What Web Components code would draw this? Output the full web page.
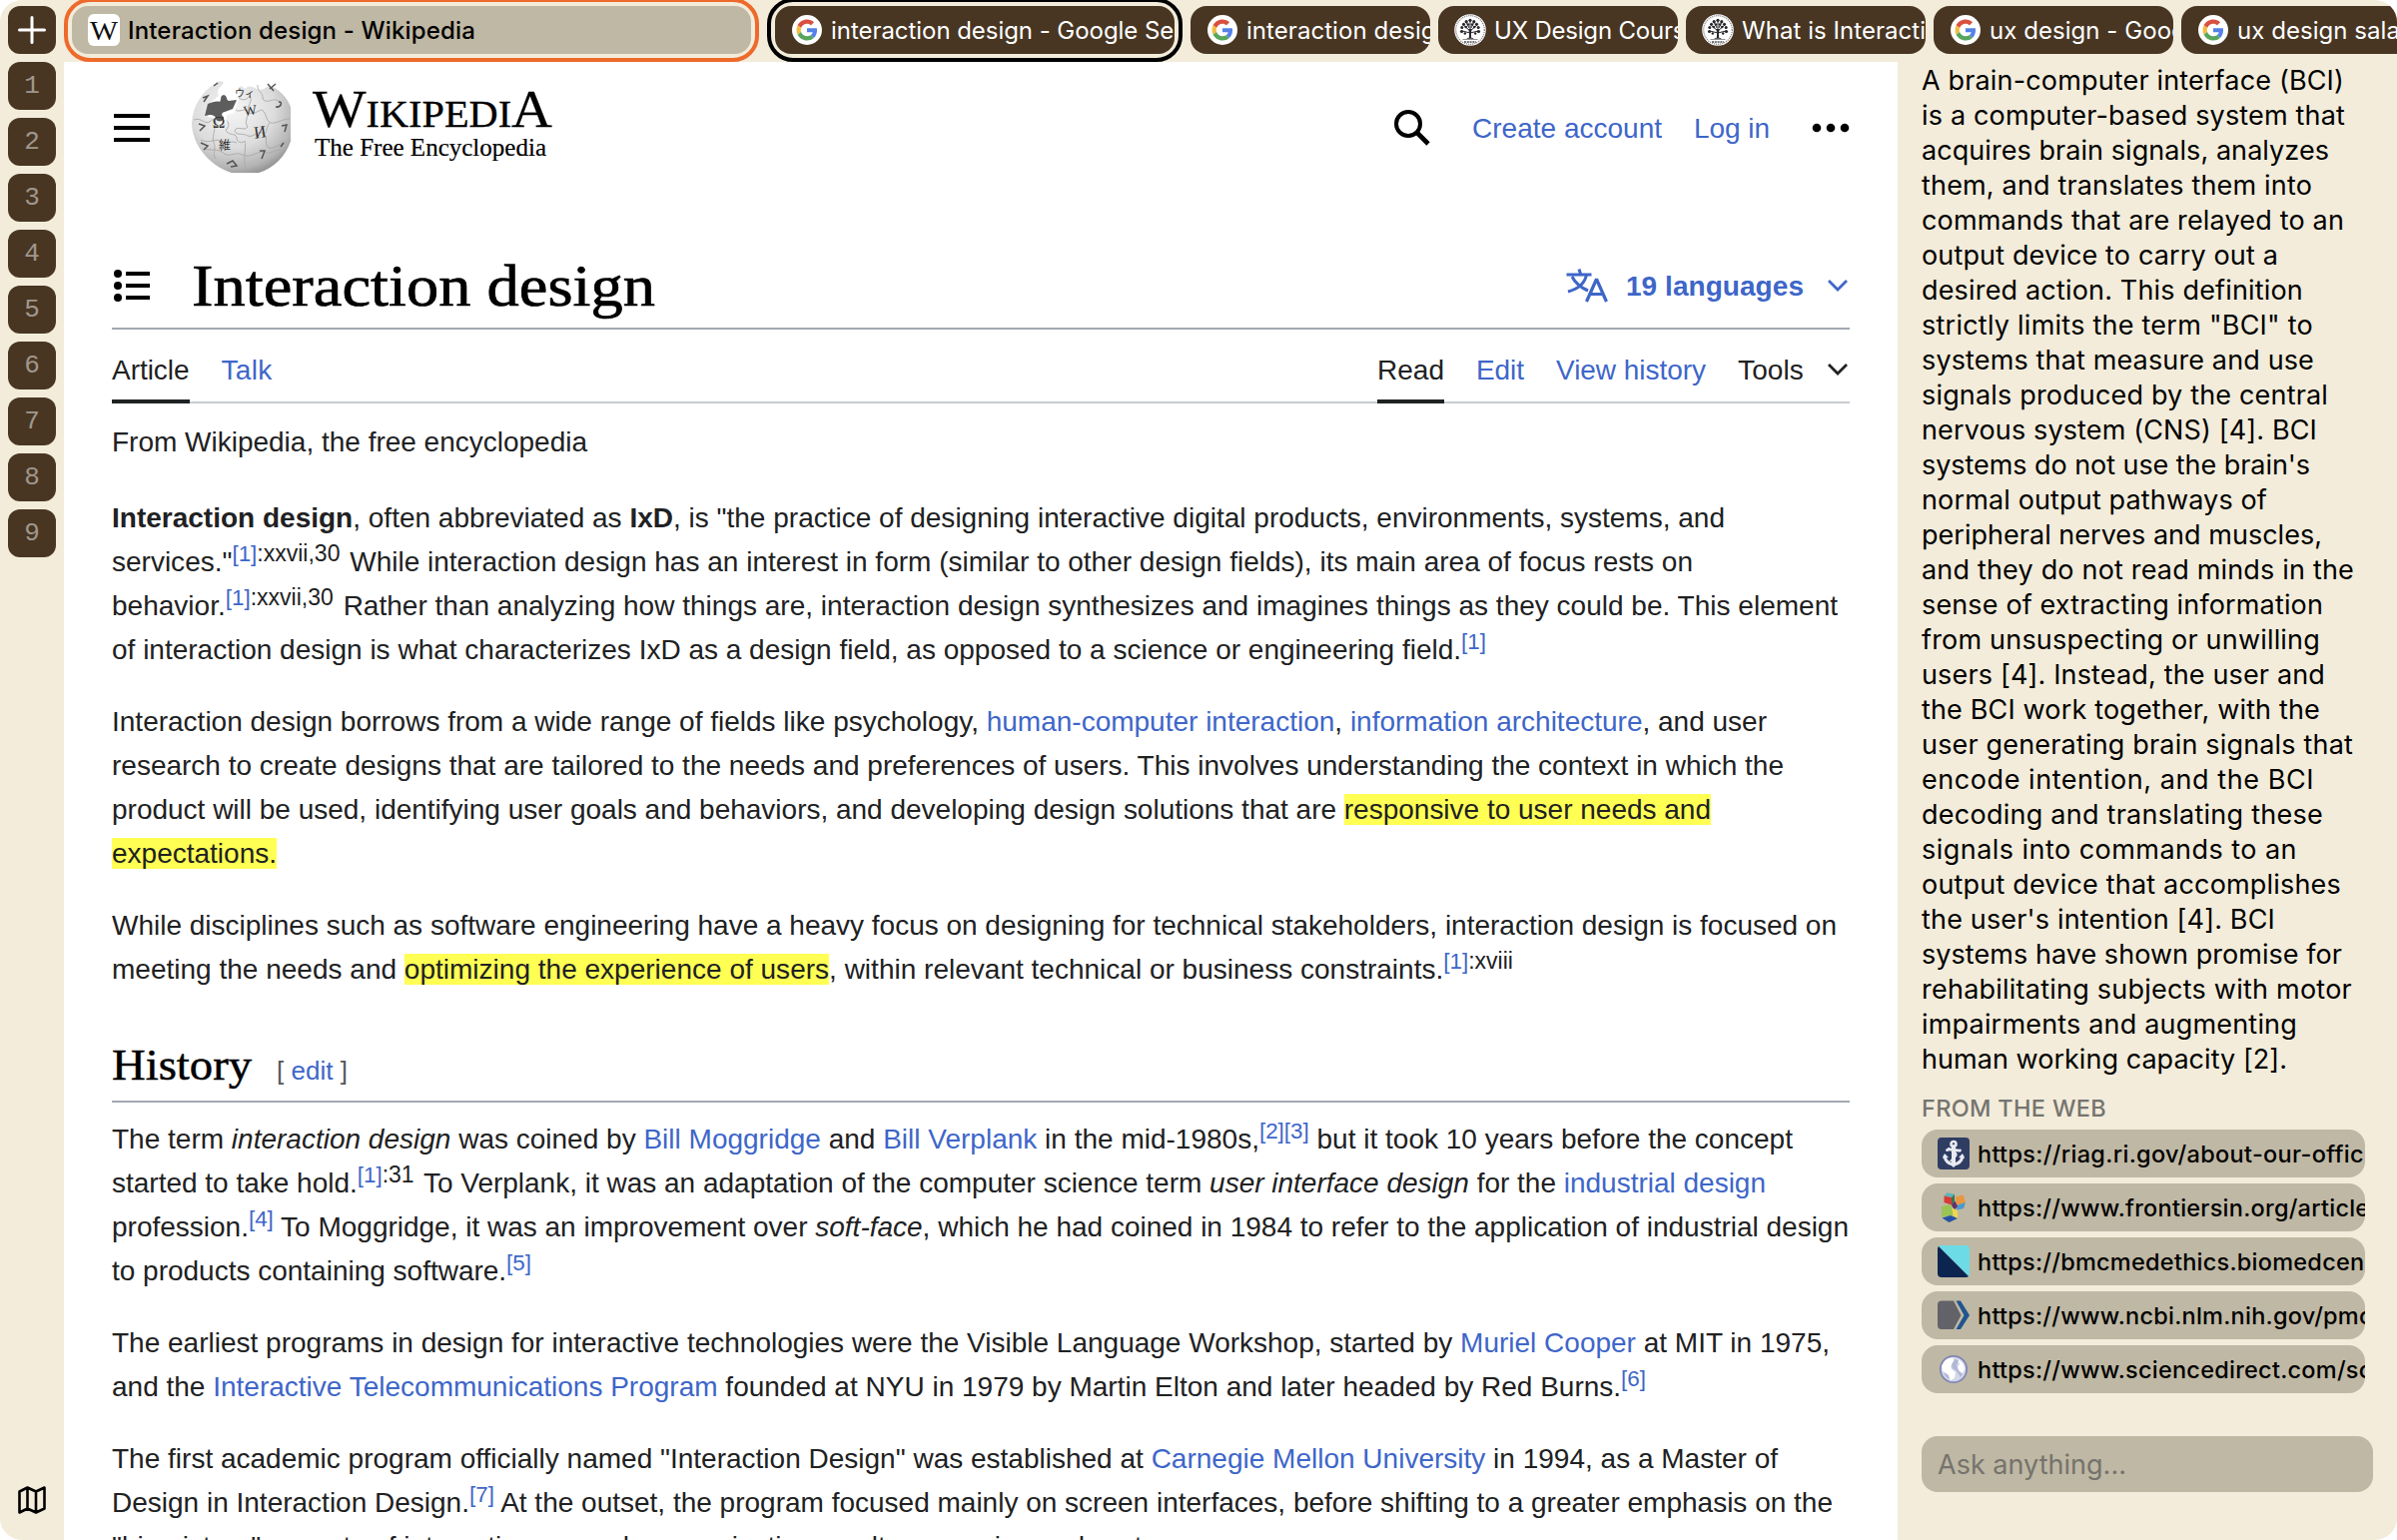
<!DOCTYPE html>
<html lang="en">
<head>
<meta charset="utf-8">
<title>Interaction design - Wikipedia</title>
<style>
html,body{margin:0;padding:0;width:2400px;height:1542px;overflow:hidden;background:#fff}
</style>
</head>
<body>
<browser-window></browser-window>
<script>
const ICONS = {
  plus: `<svg width="28" height="28" viewBox="0 0 28 28"><path d="M14 1.5v25M1.5 14h25" stroke="#fff" stroke-width="3" stroke-linecap="round"/></svg>`,
  map: `<svg width="30" height="30" viewBox="0 0 30 30" fill="none" stroke="#000" stroke-width="2.6" stroke-linejoin="round"><path d="M2.5 6.5 10.500 2.500 19 6.500 27.500 2.500V23.500L19 27.500 10.500 23.500 2.500 27.500ZM10.500 2.500V23.500M19 6.500V27.500"/></svg>`,
  menu: `<svg width="36" height="28" viewBox="0 0 36 28"><path d="M0 0h36v4H0zM0 12h36v4H0zM0 24h36v4H0z"/></svg>`,
  toc: `<svg width="36" height="32" viewBox="0 0 36 32"><circle cx="4" cy="4" r="4"/><circle cx="4" cy="16" r="4"/><circle cx="4" cy="28" r="4"/><path d="M12 2h24v4H12zM12 14h24v4H12zM12 26h24v4H12z"/></svg>`,
  search: `<svg width="36" height="36" viewBox="0 0 36 36" fill="none" stroke="#000"><circle cx="14" cy="14" r="12" stroke-width="4"/><path d="M22.500 22.500 34 34" stroke-width="4.600"/></svg>`,
  more: `<svg width="38" height="10" viewBox="0 0 38 10"><circle cx="5" cy="5" r="4.300"/><circle cx="19" cy="5" r="4.300"/><circle cx="33" cy="5" r="4.300"/></svg>`,
  chevron: `<svg width="20" height="12" viewBox="0 0 20 12" fill="none" stroke="currentColor" stroke-width="2.800"><path d="M1 1 10 10 19 1"/></svg>`,
  lang: `<svg width="42" height="34" viewBox="0 0 42 34" fill="none" stroke="#3e66c9" stroke-width="3"><path d="M13 .5 14.500 5M.5 6h25M20.500 6C19 14 13 20 2 23M6 8c3 6 9 11 16 14"/><path d="M20.500 33 30.500 10.500 40.500 33M24.500 25.500h12" stroke-width="3.200" stroke-linejoin="bevel"/></svg>`,
  google: `<svg width="32" height="32" viewBox="0 0 32 32"><circle cx="16" cy="16" r="15" fill="#fff"/><g transform="translate(5.500 5.500) scale(.4375)"><path fill="#d9503f" d="M24 9.500c3.540 0 6.710 1.220 9.210 3.600l6.850-6.850C35.900 2.380 30.470 0 24 0 14.620 0 6.510 5.380 2.560 13.220l7.980 6.190C12.430 13.720 17.740 9.500 24 9.500z"/><path fill="#5482e8" d="M46.980 24.550c0-1.570-.15-3.090-.38-4.550H24v9.020h12.940c-.58 2.960-2.260 5.480-4.780 7.180l7.730 6c4.510-4.180 7.090-10.360 7.090-17.650z"/><path fill="#f2bd42" d="M10.530 28.590c-.48-1.450-.76-2.990-.76-4.590s.27-3.140.76-4.590l-7.980-6.190C.92 16.460 0 20.120 0 24s.92 7.540 2.560 10.780l7.970-6.190z"/><path fill="#58a65c" d="M24 48c6.480 0 11.930-2.130 15.890-5.810l-7.730-6c-2.150 1.450-4.920 2.300-8.160 2.300-6.260 0-11.570-4.220-13.470-9.910l-7.980 6.190C6.510 42.620 14.620 48 24 48z"/></g></svg>`,
  tree: `<svg width="32" height="32" viewBox="0 0 32 32"><circle cx="16" cy="16" r="15.800" fill="#fff"/><circle cx="16" cy="16" r="14.300" fill="none" stroke="#8d8d92" stroke-width="1.300" stroke-dasharray="1.200 .9"/><g fill="#26262b"><path d="M14.700 24c.6-3 .4-6-.4-9h3.400c-.8 3-1 6-.4 9h2v.8h-6.600V24z"/><g stroke="#26262b" stroke-width="1" fill="none"><path d="M16 19 8 17M16 17 9 11M16 17V6M16 17 23 11M16 19 24 17M15 14 12 8M17 14 20 8"/></g><circle cx="7.500" cy="17.500" r="1.600"/><circle cx="7.800" cy="13.500" r="1.500"/><circle cx="9.500" cy="10.200" r="1.500"/><circle cx="12.200" cy="7.700" r="1.600"/><circle cx="16" cy="6.300" r="1.600"/><circle cx="19.800" cy="7.700" r="1.600"/><circle cx="22.500" cy="10.200" r="1.500"/><circle cx="24.200" cy="13.500" r="1.500"/><circle cx="24.500" cy="17.500" r="1.600"/><circle cx="11.800" cy="13" r="1.300"/><circle cx="20.200" cy="13" r="1.300"/><circle cx="14" cy="10.500" r="1.200"/><circle cx="18" cy="10.500" r="1.200"/><circle cx="10.800" cy="19.500" r="1.200"/><circle cx="21.200" cy="19.500" r="1.200"/></g><path d="M8.500 25.500h15" stroke="#777" stroke-width=".8"/><path d="M10 28h12" stroke="#777" stroke-width="1.800" stroke-dasharray="2 .8"/></svg>`,
  anchor: `<svg width="32" height="32" viewBox="0 0 32 32"><rect width="32" height="32" rx="4" fill="#2f3d63"/><g fill="none" stroke="#e8eaf1" stroke-linecap="round"><circle cx="16" cy="6.500" r="2.500" stroke-width="2.600"/><path d="M16 9v17" stroke-width="4"/><path d="M9.500 12.500c4-2 9 1 13 .5" stroke-width="2.800"/><path d="M7 19c1 5 5 7.500 9 8 4-.5 8-3 9-8" stroke-width="3"/><path d="M11 10.500c5 6 7 1 8 7-1 3-4 3-6 6" stroke-width="1.500"/></g><path d="M5 21l2-5 4 4zM27 21l-2-5-4 4zM13 27h6l-3 3z" fill="#e8eaf1"/></svg>`,
  frontiers: `<svg width="32" height="32" viewBox="0 0 32 32"><path fill="#5bb5ba" d="M6.500 4.500 9.500 1.300 17 2.800 14 6z"/><path fill="#d93a36" d="M6.500 4.500 14 6v7.500L6.500 11z"/><path fill="#35784b" d="M14 6 17 2.800v7L14 14.500z"/><path fill="#e8963f" d="M18 5.500 25.500 3.500 28 11 18.500 14z"/><path fill="#4a9bcb" d="M18.500 14 28 11 26 17 19.500 18.500z"/><path fill="#652f6e" d="M14 13.500 17.500 9.500 20 15 16.500 19z"/><path fill="#9ac455" d="M4 15 13.500 13 15.500 24 4 25.500z"/><path fill="#ecd94d" d="M14.500 16 20 19.500V27.500L15.500 24z"/><path fill="#2552a3" d="M4.500 26.500 13 24 20 27 11.500 31z"/></svg>`,
  bmc: `<svg width="32" height="32" viewBox="0 0 32 32"><defs><clipPath id="r"><rect width="32" height="32" rx="4"/></clipPath></defs><g clip-path="url(#r)"><path fill="#6ddbe6" d="M0 0h32v32z"/><path fill="#0c2450" d="M0 0v32h32z"/></g></svg>`,
  ncbi: `<svg width="32" height="32" viewBox="0 0 32 32"><path fill="#626368" d="M4 1.500h12L23.500 16 16 30H4a4 4 0 0 1-4-4V5.500a4 4 0 0 1 4-4z"/><path fill="#20558f" d="M18.500 1.500H23L32 16 23 30H18.500L26.500 16z"/></svg>`,
  globe: `<svg width="32" height="32" viewBox="0 0 32 32"><circle cx="16" cy="16" r="13.200" fill="#d3d7e8" stroke="#8187b4" stroke-width="1.800"/><path fill="#fff" d="M7 8c2-3 6-4 9-3l1 3-4 5 1 3 4 3-1 6-4 2-3-6-5-3-1-5zM20 6c4 1 7 6 7 10l-2 4-4-2-1-4 2-3z"/><path fill="#a9afd0" d="M17 6l4 1-2 5 2 5 4 4-2 3-4-6-4-3-1-4zM6 19l5 3 1 4c-3-1-5-4-6-7z" opacity=".8"/></svg>`,
  wfav: `<svg width="32" height="32" viewBox="0 0 32 32"><rect width="32" height="32" rx="6" fill="#fff"/><text x="16" y="26" text-anchor="middle" textLength="28" lengthAdjust="spacingAndGlyphs" font-family="Liberation Serif,serif" font-size="28" fill="#111">W</text></svg>`,
  wiki: `<svg width="100" height="92" viewBox="0 0 100 92"><defs>
    <radialGradient id="g" cx=".4" cy=".3" r=".75"><stop offset="0" stop-color="#f6f6f6"/><stop offset=".55" stop-color="#dcdcdc"/><stop offset=".85" stop-color="#b2b2b2"/><stop offset="1" stop-color="#888"/></radialGradient></defs>
    <path fill="url(#g)" d="M24 3C27 0 31-1 33 2c-3 4-8 7-5 12-3 5-9 6-11 12v10l8 1 4 6 6-1 1-8 7-2 4-10 1-5 3-3c-4-1-6-6-1-9l5 3c3-5 9-1 11 0 3 2 8 0 10-2 4-1 8 0 11 3 11 8 17 22 16 37-2 27-22 48-49 48S1 68 1 42C2 25 11 11 24 3z"/>
    <path fill="#5d5d5d" d="M17 23c5-2 9-3 12-2 2-3 0-6 4-7 4 1 2 5 5 6l8-1-4 9-8 3c-3 0-4 4-1 5 1 5-7 6-8 2 0-3-3-4-6-4l-5 1z"/>
    <g fill="none" stroke="#a9a9a9" stroke-width=".9"><path d="M3 39c8-3 10 5 16 2 3-5 8 0 5 4 0 7-3 11-1 17 3 6-2 11 2 16"/><path d="M36 40c3 2 2 7-1 9 2 6 9 3 11 7-1 6 6 7 8 4 2 6-2 15 1 27"/><path d="M48 17c5 3 8 2 11-2 4 6-4 10-1 17 5 2 9-2 13-3 6 4 3 10 9 13 7 1 11-4 19-4"/><path d="M45 29c4 3 8-2 12 1 1 7-4 10 0 16-3 5-11-2-13 4 1 5 9 2 13 5"/><path d="M57 55c6 2 9-5 15-3 6 3 1 11 6 15 8 1 10-5 18-6"/><path d="M10 59c9 5 15-3 21 2 6 3 8-2 15 1M13 68c8 2 15-1 22 6 7 1 10-3 17 0 8 4 14-4 21-3 7 4 10-3 18-2"/><path d="M67 4c-1 7 6 7 5 14 5 6 10-2 16 2M79 42c-4 5-2 10-7 12"/></g>
    <g font-family="Liberation Serif,Noto Sans CJK JP,serif" fill="#333" text-anchor="middle"><text x="28" y="47" font-size="17">Ω</text><text x="60" y="34" font-size="14" transform="rotate(-8 60 34)">W</text><text x="70" y="57" font-size="17" transform="rotate(-8 70 57)">И</text><text x="34" y="69" font-size="12">維</text><text x="54" y="16" font-size="10">ウィ</text></g>
    <g fill="none" stroke="#555" stroke-width="1.500"><path d="M69 70h5l-3 8M88 21c4-1 3 6-3 5M8 43l6 2-5 5M10 62l7 3-4 4M12 17l5-2-4 6M77 3l6 7M79 8l6-5M36 83l6-3 4 5-6 1M91 45l5-1-2 7M90 66l3-4M23 5l4-3"/></g></svg>`
};

class UiIcon extends HTMLElement {
  connectedCallback() {
    if (this.shadowRoot) return;
    this.attachShadow({mode: 'open'}).innerHTML =
      `<style>:host{display:inline-flex;flex:none}svg{display:block}</style>${ICONS[this.getAttribute('name')]}`;
  }
}

/* One line of text that is tracked (or stretched) to the width in its "w" attribute. */
class TextLine extends HTMLElement {
  connectedCallback() {
    if (!this.shadowRoot)
      this.attachShadow({mode: 'open'}).innerHTML =
        `<style>:host{display:block;white-space:nowrap}span{display:inline-block;transform-origin:0 50%;letter-spacing:0}</style><span><slot></slot></span>`;
    const target = +this.getAttribute('w');
    if (!target) return;
    const span = this.shadowRoot.querySelector('span');
    const natural = span.getBoundingClientRect().width;
    if (!natural) return;
    if (this.hasAttribute('stretch')) {
      span.style.transform = `scaleX(${target / natural})`;
      this.style.width = target + 'px';
    } else {
      span.style.letterSpacing = (target - natural) / this.textContent.length + 'px';
    }
  }
}

class BrowserTab extends HTMLElement {
  connectedCallback() {
    if (this.shadowRoot) return;
    this.attachShadow({mode: 'open'}).innerHTML = `<style>
      :host{display:block;flex:none;width:240px;height:48px}
      :host([ring]){padding:4px;border:4px solid #000;border-radius:26px;margin:-8px}
      :host([ring=orange]){border-color:#ee6a2c}
      .pill{height:48px;border-radius:16px;background:#483623;color:#fff;overflow:hidden;display:flex;align-items:center;gap:8px;padding-left:16px;box-sizing:border-box;font:24px/46px Inter,sans-serif;letter-spacing:var(--tab-track,0);white-space:nowrap}
      :host([active]) .pill{background:#bfb8a4;color:#000;font-weight:500;letter-spacing:0}
      span{padding-top:2px}
    </style><div class="pill"><ui-icon name="${this.getAttribute('icon')}"></ui-icon><span><slot></slot></span></div>`;
  }
}

class SpaceRail extends HTMLElement {
  connectedCallback() {
    this.attachShadow({mode: 'open'}).innerHTML = `<style>
      :host{display:flex;flex-direction:column;gap:8px;width:64px;box-sizing:border-box;padding:6px 8px 20px;flex:none}
      div{width:48px;height:48px;border-radius:12px;background:#483623;color:#a0968b;display:flex;align-items:center;justify-content:center;font:26px/48px "Liberation Mono",monospace}
      .foot{margin-top:auto;align-self:center;margin-bottom:5px}
    </style><div><ui-icon name="plus"></ui-icon></div>${[1,2,3,4,5,6,7,8,9].map(n => `<div>${n}</div>`).join('')}<ui-icon class="foot" name="map"></ui-icon>`;
  }
}

class TabStrip extends HTMLElement {
  connectedCallback() {
    this.attachShadow({mode: 'open'}).innerHTML = `<style>
      :host{display:flex;height:62px;box-sizing:border-box;padding:6px 0 0 8px;gap:8px;overflow:hidden;--tab-track:.05px}
      browser-tab:nth-child(2){width:680px;margin-right:8px}
      browser-tab:nth-child(3){width:400px;margin-right:0;--tab-track:-.05px}
      browser-tab:nth-child(5){--tab-track:-.2px}
    </style>
    <browser-tab icon="wfav" active ring="orange"><text-line w="348">Interaction design - Wikipedia</text-line></browser-tab>
    <browser-tab icon="google" ring>interaction design - Google Se</browser-tab>
    <browser-tab icon="google">interaction desig</browser-tab>
    <browser-tab icon="tree">UX Design Cours</browser-tab>
    <browser-tab icon="tree">What is Interacti</browser-tab>
    <browser-tab icon="google">ux design - Goog</browser-tab>
    <browser-tab icon="google">ux design sala</browser-tab>`;
  }
}

class WikiHeader extends HTMLElement {
  connectedCallback() {
    this.attachShadow({mode: 'open'}).innerHTML = `<style>
      :host{display:flex;align-items:center;height:132px;padding-left:2px}
      .mark{display:flex;flex-direction:column;align-self:flex-start;padding-top:31px;margin-left:22px;font-family:"Liberation Serif",serif;color:#000}
      .word{font-size:37px;line-height:44px;-webkit-text-stroke:.3px #000}.word b{font-weight:400;font-size:52px;line-height:0}
      .tag{font-size:25px;line-height:28px;margin:-3px 0 0 2px;-webkit-text-stroke:.2px #000}
      .user{margin-left:auto;display:flex;align-items:center;color:#3e66c9;font:28px/44px "Liberation Sans",Arial,sans-serif}
      .user text-line{padding-top:1px}
    </style>
    <ui-icon name="menu"></ui-icon><ui-icon name="wiki" style="margin:0 0 2px 41px"></ui-icon>
    <div class="mark"><text-line class="word" w="240" stretch><b>W</b>IKIPEDI<b>A</b></text-line><text-line class="tag" w="232">The Free Encyclopedia</text-line></div>
    <div class="user"><ui-icon name="search"></ui-icon><text-line w="190" style="margin-left:42px">Create account</text-line><text-line w="76" style="margin-left:32px">Log in</text-line><ui-icon name="more" style="margin-left:42px"></ui-icon></div>`;
  }
}

class PageTitle extends HTMLElement {
  connectedCallback() {
    this.attachShadow({mode: 'open'}).innerHTML = `<style>
      :host{display:flex;align-items:center;height:84px;margin-top:50px;padding-left:2px;border-bottom:2px solid #a2a9b1}
      .t{margin-left:42px;font:60px/84px "Liberation Serif",serif;color:#000;-webkit-text-stroke:.7px #000}
      .l{margin-left:auto;display:flex;align-items:center;color:#3e66c9;font:bold 28px/44px "Liberation Sans",Arial,sans-serif}
      .l text-line{padding-top:1px}
    </style>
    <ui-icon name="toc"></ui-icon><text-line class="t" w="464" stretch>Interaction design</text-line>
    <div class="l"><ui-icon name="lang"></ui-icon><text-line w="178" style="margin-left:18px">19 languages</text-line><ui-icon name="chevron" style="margin:0 2px 0 24px"></ui-icon></div>`;
  }
}

class PageTabs extends HTMLElement {
  connectedCallback() {
    this.attachShadow({mode: 'open'}).innerHTML = `<style>
      :host{display:flex;height:72px;box-sizing:content-box;border-bottom:2px solid #c8ccd1;font:28px/60px "Liberation Sans",Arial,sans-serif;color:#3e66c9}
      text-line{margin-top:10px;padding-top:1px;height:59px}
      .on{color:#202122;border-bottom:4px solid #202122}
      .tools{display:flex;align-items:center;color:#202122;margin-left:32px}
      .tools text-line{padding-top:0;height:60px}
      ui-icon{margin:8px 2px 0 24px}
    </style>
    <text-line class="on" w="77.500">Article</text-line><text-line w="51" style="margin-left:32px">Talk</text-line>
    <text-line class="on" w="67" style="margin-left:auto">Read</text-line><text-line w="48" style="margin-left:32px">Edit</text-line><text-line w="150" style="margin-left:32px">View history</text-line>
    <div class="tools"><text-line w="66">Tools</text-line><ui-icon name="chevron"></ui-icon></div>`;
  }
}

class WikiArticle extends HTMLElement {
  connectedCallback() {
    const r = (s) => `<sup><a>${s}</a></sup>`;
    this.attachShadow({mode: 'open'}).innerHTML = `<style>
      :host{display:block;font:28px/44px "Liberation Sans",Arial,sans-serif;color:#202122}
      a{color:#3e66c9}
      sup{font-size:22.400px;line-height:0;vertical-align:10px}
      .n{font-size:23px}
      mark{background:#ffff54;color:inherit}
      .from{margin-top:17px}
      .p{margin-top:28px}
      .from + .p{margin-top:32px}
      .h{display:flex;align-items:center;height:72px;margin-top:37px;border-bottom:2px solid #a2a9b1}
      .h .t{font:43.500px/72px "Liberation Serif",serif;color:#000;-webkit-text-stroke:.5px #000}
      .h .e{font-size:26px;line-height:34px;margin:12px 0 0 25px;color:#54595d}
      .h + .p{margin-top:15px}
    </style>
    <text-line class="from" w="476">From Wikipedia, the free encyclopedia</text-line>
    <div class="p">
      <text-line w="1615"><b>Interaction design</b>, often abbreviated as <b>IxD</b>, is "the practice of designing interactive digital products, environments, systems, and</text-line>
      <text-line w="1583">services."${r('[1]')}<sup class="n" style="margin-right:2px">:xxvii,30</sup> While interaction design has an interest in form (similar to other design fields), its main area of focus rests on</text-line>
      <text-line w="1728">behavior.${r('[1]')}<sup class="n" style="margin-right:2px">:xxvii,30</sup> Rather than analyzing how things are, interaction design synthesizes and imagines things as they could be. This element</text-line>
      <text-line w="1376">of interaction design is what characterizes IxD as a design field, as opposed to a science or engineering field.${r('[1]')}</text-line>
    </div>
    <div class="p">
      <text-line w="1657">Interaction design borrows from a wide range of fields like psychology, <a>human-computer interaction</a>, <a>information architecture</a>, and user</text-line>
      <text-line w="1674">research to create designs that are tailored to the needs and preferences of users. This involves understanding the context in which the</text-line>
      <text-line w="1601">product will be used, identifying user goals and behaviors, and developing design solutions that are <mark>responsive to user needs and</mark></text-line>
      <text-line w="165"><mark>expectations.</mark></text-line>
    </div>
    <div class="p">
      <text-line w="1727">While disciplines such as software engineering have a heavy focus on designing for technical stakeholders, interaction design is focused on</text-line>
      <text-line w="1403">meeting the needs and <mark>optimizing the experience of users</mark>, within relevant technical or business constraints.${r('[1]')}<sup class="n">:xviii</sup></text-line>
    </div>
    <div class="h"><text-line class="t" w="140" stretch>History</text-line><text-line class="e" w="71">[ <a>edit</a> ]</text-line></div>
    <div class="p">
      <text-line w="1683">The term <i>interaction design</i> was coined by <a>Bill Moggridge</a> and <a>Bill Verplank</a> in the mid-1980s,${r('[2]')}${r('[3]')} but it took 10 years before the concept</text-line>
      <text-line w="1656">started to take hold.${r('[1]')}<sup class="n" style="margin-right:2px">:31</sup> To Verplank, it was an adaptation of the computer science term <i>user interface design</i> for the <a>industrial design</a></text-line>
      <text-line w="1739">profession.${r('[4]')} To Moggridge, it was an improvement over <i>soft-face</i>, which he had coined in 1984 to refer to the application of industrial design</text-line>
      <text-line w="420">to products containing software.${r('[5]')}</text-line>
    </div>
    <div class="p">
      <text-line w="1720">The earliest programs in design for interactive technologies were the Visible Language Workshop, started by <a>Muriel Cooper</a> at MIT in 1975,</text-line>
      <text-line w="1536">and the <a>Interactive Telecommunications Program</a> founded at NYU in 1979 by Martin Elton and later headed by Red Burns.${r('[6]')}</text-line>
    </div>
    <div class="p">
      <text-line w="1668">The first academic program officially named "Interaction Design" was established at <a>Carnegie Mellon University</a> in 1994, as a Master of</text-line>
      <text-line w="1723">Design in Interaction Design.${r('[7]')} At the outset, the program focused mainly on screen interfaces, before shifting to a greater emphasis on the</text-line>
      <text-line>"big picture" aspects of interaction—people, organizations, culture, service and system.</text-line>
    </div>`;
  }
}

class WebLink extends HTMLElement {
  connectedCallback() {
    this.attachShadow({mode: 'open'}).innerHTML = `<style>
      :host{display:flex;align-items:center;gap:8px;width:444px;height:48px;box-sizing:border-box;padding-left:16px;border-radius:16px;background:#bfb8a4;overflow:hidden;white-space:nowrap;font:500 23.500px/46px Inter,sans-serif;letter-spacing:.25px;color:#000}
      span{padding-top:2px}
    </style><ui-icon name="${this.getAttribute('icon')}"></ui-icon><span><slot></slot></span>`;
  }
}

class AskPanel extends HTMLElement {
  connectedCallback() {
    const lines = [
      ['A brain-computer interface (BCI)',423],['is a computer-based system that',424],['acquires brain signals, analyzes',408],
      ['them, and translates them into',391],['commands that are relayed to an',423],['output device to carry out a',357],
      ['desired action. This definition',382],['strictly limits the term "BCI" to',392],['systems that measure and use',393],
      ['signals produced by the central',407],['nervous system (CNS) [4]. BCI',396],["systems do not use the brain's",389],
      ['normal output pathways of',346],['peripheral nerves and muscles,',401],['and they do not read minds in the',433],
      ['sense of extracting information',402],['from unsuspecting or unwilling',399],['users [4]. Instead, the user and',404],
      ['the BCI work together, with the',399],['user generating brain signals that',432],['encode intention, and the BCI',393],
      ['decoding and translating these',402],['signals into commands to an',376],['output device that accomplishes',420],
      ["the user's intention [4]. BCI",354],['systems have shown promise for',421],['rehabilitating subjects with motor',431],
      ['impairments and augmenting',376],['human working capacity [2].',366]];
    this.attachShadow({mode: 'open'}).innerHTML = `<style>
      :host{display:flex;flex-direction:column;width:500px;box-sizing:border-box;padding:1px 24px 48px;flex:none}
      .a{font:27px/35px Inter,sans-serif;color:#000}
      .c{font:500 23.500px/32px Inter,sans-serif;color:#757470;margin:16px 0 5px}
      .links{display:flex;flex-direction:column;gap:6px}
      .ask{margin-top:auto;height:56px;border-radius:16px;background:#bfb8a4;color:#75736c;padding-left:16px;font:27px/58px Inter,sans-serif}
    </style>
    <div class="a">${lines.map(([t, w]) => `<text-line w="${w}">${t}</text-line>`).join('')}</div>
    <text-line class="c" w="185">FROM THE WEB</text-line>
    <div class="links">
      <web-link icon="anchor"><text-line w="387">https://riag.ri.gov/about-our-offic</text-line></web-link>
      <web-link icon="frontiers">https://www.frontiersin.org/article</web-link>
      <web-link icon="bmc">https://bmcmedethics.biomedcen</web-link>
      <web-link icon="ncbi">https://www.ncbi.nlm.nih.gov/pmc</web-link>
      <web-link icon="globe">https://www.sciencedirect.com/sc</web-link>
    </div>
    <div class="ask"><text-line w="189">Ask anything...</text-line></div>`;
  }
}

class BrowserWindow extends HTMLElement {
  connectedCallback() {
    this.attachShadow({mode: 'open'}).innerHTML = `<style>
      :host{display:flex;width:2400px;height:1542px;background:#f3ecda;border-radius:22px;overflow:hidden}
      .col{display:flex;flex-direction:column;flex:1;min-width:0}
      .row{display:flex;flex:1;min-height:0}
      main{flex:1;min-width:0;background:#fff;padding:0 48px;overflow:hidden}
    </style>
    <space-rail></space-rail>
    <div class="col"><tab-strip></tab-strip>
      <div class="row">
        <main><wiki-header></wiki-header><page-title></page-title><page-tabs></page-tabs><wiki-article></wiki-article></main>
        <ask-panel></ask-panel>
      </div>
    </div>`;
  }
}

customElements.define('ui-icon', UiIcon);
customElements.define('browser-tab', BrowserTab);
customElements.define('web-link', WebLink);
customElements.define('text-line', TextLine);
customElements.define('space-rail', SpaceRail);
customElements.define('tab-strip', TabStrip);
customElements.define('wiki-header', WikiHeader);
customElements.define('page-title', PageTitle);
customElements.define('page-tabs', PageTabs);
customElements.define('wiki-article', WikiArticle);
customElements.define('ask-panel', AskPanel);
customElements.define('browser-window', BrowserWindow);
</script>
</body>
</html>
